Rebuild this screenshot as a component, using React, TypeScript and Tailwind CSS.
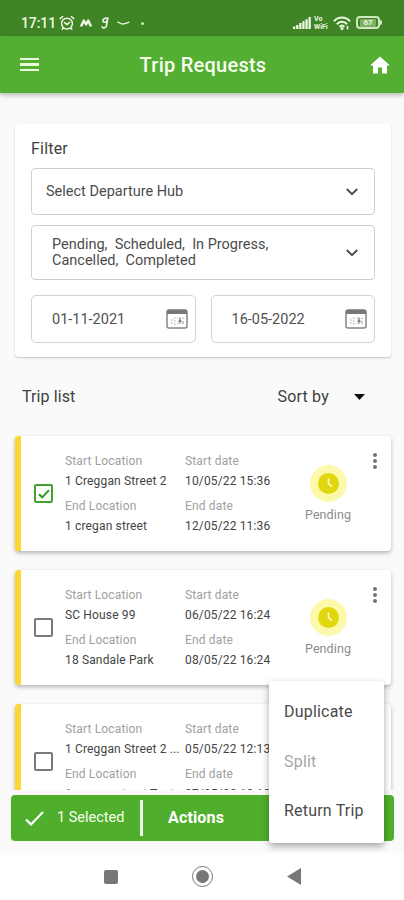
import { useState } from "react";

interface Trip {
  id: number;
  startLocation: string;
  endLocation: string;
  startDate: string;
  endDate: string;
}

const TRIPS: Trip[] = [
  {
    id: 1,
    startLocation: "1 Creggan Street 2",
    endLocation: "1 cregan street",
    startDate: "10/05/22 15:36",
    endDate: "12/05/22 11:36",
  },
  {
    id: 2,
    startLocation: "SC House 99",
    endLocation: "18 Sandale Park",
    startDate: "06/05/22 16:24",
    endDate: "08/05/22 16:24",
  },
  {
    id: 3,
    startLocation: "1 Creggan Street 2 ...",
    endLocation: "1 cregan street Test",
    startDate: "05/05/22 12:13",
    endDate: "07/05/22 12:13",
  },
];

function StatusBar() {
  return (
    <div className="flex h-9 shrink-0 items-start bg-[#3f8425] pt-[14px] pr-[22px] pl-[21px] text-[#eef8e4]">
      <span className="text-[14px] leading-[18px] font-medium tracking-[-0.1px]">
        17:11
      </span>
      <svg
        className="mt-[1px] ml-[3px] h-4 w-4"
        viewBox="0 0 16 16"
        fill="none"
        stroke="currentColor"
        strokeWidth="1.5"
        strokeLinecap="round"
        strokeLinejoin="round"
      >
        <circle cx="8" cy="8.6" r="5.4" />
        <path d="M1.2 3.6 3.7 1.5M14.8 3.6l-2.5-2.1M5.6 7.6 8 9.6l2.6-2.4M4.2 13l-1 1.2M11.8 13l1 1.2" />
      </svg>
      <svg
        className="mt-[5px] ml-[5px] h-2 w-[12px]"
        viewBox="0 0 12 8"
        fill="none"
        stroke="currentColor"
        strokeWidth="2.4"
        strokeLinejoin="round"
      >
        <path d="M1 7.5 3.8 1.6 6 5.4 8.2 1.6 11 7.5" />
      </svg>
      <svg
        className="mt-[3px] ml-[9px] h-[12px] w-[8px]"
        viewBox="0 0 8 13"
        fill="none"
        stroke="currentColor"
        strokeWidth="1.7"
        strokeLinecap="round"
      >
        <path d="M7.2 1.2C4.2.6 1.8 2 1.7 4c0 2.2 3.3 2.4 4.5-.2L7 1.4 5.6 9.2C5 12 2 12.6 1 10.6" />
      </svg>
      <svg
        className="mt-[7px] ml-[8px] h-[5px] w-[13px]"
        viewBox="0 0 13 5"
        fill="none"
        stroke="currentColor"
        strokeWidth="1.3"
        strokeLinecap="round"
      >
        <path d="M.8 1.2c2 .2 2 1.8 5 1.8s4-1 6.2-1.8" />
      </svg>
      <span className="mt-2 ml-[11px] h-[3px] w-[3px] rounded-full bg-[#c5f78f]" />

      <div className="ml-auto flex items-start">
        <svg
          className="mt-[3px] h-[12px] w-[18px]"
          viewBox="0 0 18 12"
          fill="currentColor"
        >
          <rect x="0" y="9.5" width="2.3" height="2.5" />
          <rect x="3.1" y="8" width="2.3" height="4" />
          <rect x="6.2" y="6" width="2.3" height="6" />
          <rect x="9.3" y="4.2" width="2.3" height="7.8" />
          <rect x="12.4" y="2.2" width="2.3" height="9.8" />
          <rect x="15.5" y="0" width="2.3" height="12" />
        </svg>
        <div className="mt-px ml-[3px] flex w-4 flex-col gap-px text-[7px] leading-[8px] font-bold">
          <span className="-mb-px h-2">Vo</span>
          <span className="h-2">WiFi</span>
        </div>
        <svg
          className="mt-[2px] ml-[3px] h-[14px] w-[18px]"
          viewBox="0 0 18 14"
          fill="none"
          stroke="currentColor"
          strokeWidth="2"
        >
          <path d="M1 5.2c4.600-4.800 11.400-4.800 16 0" />
          <path d="M3.800 8.200c3-3.200 7.400-3.200 10.400 0" />
          <path d="M6.500 10.800c1.500-1.500 3.500-1.500 5 0" />
          <circle cx="9" cy="12.4" r=".6" />
          <path d="M14.5 10v3.5" strokeWidth="1.6" />
        </svg>
        <div className="mt-[2px] ml-[5px] flex items-center">
          <div className="flex h-[13px] w-6 items-center justify-center rounded-[4px] border-2 border-[#d0e8bf]">
            <span className="rounded-[1px] bg-[#bfe0a8]/50 px-[3px] text-[8px] leading-[8px] font-bold">
              67
            </span>
          </div>
          <span className="h-[5px] w-[2px] rounded-r-full bg-[#d9efc9]" />
        </div>
      </div>
    </div>
  );
}

function Header() {
  return (
    <header className="relative z-10 flex h-[57px] shrink-0 items-center justify-between bg-[#53ae31] pr-[14px] pl-5 text-[#f6ffef] shadow-[0_2px_5px_rgba(0,0,0,0.28)]">
      <button className="flex w-[19px] flex-col gap-[3px]">
        <span className="h-[2.5px] w-full bg-[#eafbdc]" />
        <span className="h-[2.5px] w-full bg-[#eafbdc]" />
        <span className="h-[2.5px] w-full bg-[#eafbdc]" />
      </button>
      <h1 className="mr-[3px] text-[20px] leading-6 font-medium tracking-[0.25px]">
        Trip Requests
      </h1>
      <svg className="h-[18px] w-5" viewBox="2 3 20 17" fill="#fff">
        <path d="M10 20v-6h4v6h5v-8h3L12 3 2 12h3v8z" />
      </svg>
    </header>
  );
}

function Chevron() {
  return (
    <svg
      className="h-2 w-3"
      viewBox="0 0 12 8"
      fill="none"
      stroke="#4a4a4a"
      strokeWidth="1.8"
    >
      <path d="M.8 1 6 6.2 11.2 1" />
    </svg>
  );
}

function CalendarIcon() {
  return (
    <svg className="h-5 w-[22px]" viewBox="0 0 22 20" fill="none">
      <rect
        x="1"
        y="1"
        width="20"
        height="18"
        rx="2"
        stroke="#858585"
        strokeWidth="1.5"
      />
      <path d="M1 5V2.5Q1 .8 2.8.8h16.4Q21 .8 21 2.5V5z" fill="#777" />
      <path
        d="M5 11h1.5M5 14h1.5M8 9h1.5M8 12h1.500M8 15h1.500M11.500 9h1M11.500 14.500h1M17 8.500v1.500M17 12v3"
        stroke="#a3a3a3"
        strokeWidth="1.2"
      />
      <path d="M14 8.5v6M12.5 12h3" stroke="#777" strokeWidth="1.3" />
    </svg>
  );
}

function DateField({ value }: { value: string }) {
  return (
    <div className="flex h-12 flex-1 items-center justify-between rounded-[5px] border border-[#d2d2d2] pr-[7px] pl-5">
      <span className="mt-px text-[14.5px] text-[#505050]">{value}</span>
      <CalendarIcon />
    </div>
  );
}

function FilterCard() {
  return (
    <section className="mt-[31px] mr-[13px] ml-[15px] h-[233px] shrink-0 rounded-[4px] bg-white px-4 pt-[15px] shadow-[0_1px_2px_rgba(0,0,0,0.22)]">
      <h2 className="text-[16px] leading-5 tracking-[0.2px] text-[#3f3f3f]">
        Filter
      </h2>
      <div className="mt-[9px] flex h-[47px] items-center justify-between rounded-[4px] border border-[#cfcfcf] pr-4 pl-[14px]">
        <span className="mt-px text-[14.5px] text-[#4c4c4c]">
          Select Departure Hub
        </span>
        <Chevron />
      </div>
      <div className="mt-[10px] flex h-[55px] items-center justify-between rounded-[4px] border border-[#cfcfcf] pr-4 pl-5">
        <p className="mt-px text-[14.5px] leading-4 whitespace-pre text-[#4c4c4c]">
          {"Pending,  Scheduled,  In Progress,\nCancelled,  Completed"}
        </p>
        <Chevron />
      </div>
      <div className="mt-[15px] flex gap-[15px]">
        <DateField value="01-11-2021" />
        <DateField value="16-05-2022" />
      </div>
    </section>
  );
}

interface CheckboxProps {
  checked: boolean;
  onToggle: () => void;
}

function Checkbox({ checked, onToggle }: CheckboxProps) {
  return (
    <button
      role="checkbox"
      aria-checked={checked}
      onClick={onToggle}
      className={
        checked
          ? "flex h-[19px] w-[19px] items-center justify-center rounded-[2px] border-2 border-[#41a32e]"
          : "flex h-[19px] w-[19px] items-center justify-center rounded-[2px] border-2 border-[#7a7a7a]"
      }
    >
      {checked && (
        <svg
          className="h-[10px] w-[12px]"
          viewBox="0 0 12 10"
          fill="none"
          stroke="#249a1c"
          strokeWidth="1.9"
        >
          <path d="M1 5.2 4.2 8.3 11 1.2" />
        </svg>
      )}
    </button>
  );
}

function Field({ label, value }: { label: string; value: string }) {
  return (
    <div className="whitespace-nowrap">
      <p className="text-[12px] leading-5 tracking-[0.15px] text-[#a0a0a0]">
        {label}
      </p>
      <p className="text-[12px] leading-5 tracking-[0.15px] text-[#444]">
        {value}
      </p>
    </div>
  );
}

interface TripCardProps {
  trip: Trip;
  checked: boolean;
  onToggle: () => void;
}

function TripCard({ trip, checked, onToggle }: TripCardProps) {
  return (
    <article className="flex h-[115px] shrink-0 rounded-[4px] border-l-[6px] border-[#fdd631] bg-white shadow-[0_2px_4px_rgba(0,0,0,0.28)]">
      <div className="flex w-11 items-center pl-[13px]">
        <Checkbox checked={checked} onToggle={onToggle} />
      </div>
      <div className="flex w-[120px] flex-col gap-[4.5px] pt-[15px]">
        <Field label="Start Location" value={trip.startLocation} />
        <Field label="End Location" value={trip.endLocation} />
      </div>
      <div className="flex w-[115px] flex-col gap-[4.5px] pt-[15px]">
        <Field label="Start date" value={trip.startDate} />
        <Field label="End date" value={trip.endDate} />
      </div>
      <div className="flex w-14 flex-col items-center pt-[29px]">
        <div className="flex h-[37px] w-[37px] items-center justify-center rounded-full bg-[#fdf9ab]">
          <svg className="h-[21px] w-[21px]" viewBox="0 0 21 21" fill="none">
            <circle cx="10.5" cy="10.5" r="10.5" fill="#e0d80d" />
            <path
              d="M10.5 5.5v5.2l3.5 3"
              stroke="#fffbd0"
              strokeWidth="1.6"
            />
          </svg>
        </div>
        <span className="mt-[5px] text-[12.5px] leading-4 tracking-[0.1px] text-[#8b8b8b]">
          Pending
        </span>
      </div>
      <button className="ml-auto flex h-9 flex-col justify-end gap-[2px] pr-[14px] pb-[3px]">
        <span className="h-1 w-1 rounded-full bg-[#727272]" />
        <span className="h-1 w-1 rounded-full bg-[#727272]" />
        <span className="h-1 w-1 rounded-full bg-[#727272]" />
      </button>
    </article>
  );
}

function ActionsMenu() {
  return (
    <div className="absolute right-[10px] bottom-[-2px] flex h-[162px] w-[115px] flex-col rounded-[3px] bg-white px-[15px] pt-[6px] text-[16px] leading-[49.5px] tracking-[0.2px] whitespace-nowrap text-[#4a4a4a] shadow-[0_3px_7px_rgba(0,0,0,0.35)]">
      <button className="text-left">Duplicate</button>
      <button className="text-left text-[#a6a6a6]" disabled>
        Split
      </button>
      <button className="text-left">Return Trip</button>
    </div>
  );
}

function SelectionBar({ count }: { count: number }) {
  return (
    <div className="relative mr-[10px] ml-[11px] flex h-[46px] shrink-0 items-center rounded-[4px] bg-[#4faf2c] pl-[14px] text-[#f6ffef]">
      <svg
        className="h-[15px] w-[19px]"
        viewBox="0 0 19 15"
        fill="none"
        stroke="#fff"
        strokeWidth="2.2"
      >
        <path d="M1 8.5 6 13.4 18 1" />
      </svg>
      <span className="ml-[13px] w-[72px] text-[14.5px] whitespace-nowrap">
        {count} Selected
      </span>
      <span className="ml-[11px] h-9 w-[3px] bg-[#effbe8]" />
      <span className="ml-[25px] text-[16px] font-bold tracking-[0.15px] text-white">
        Actions
      </span>
      <ActionsMenu />
    </div>
  );
}

function NavBar() {
  return (
    <nav className="flex h-[47px] shrink-0 items-center bg-white pl-[104px]">
      <span className="h-[14px] w-[14px] rounded-[2px] bg-[#777]" />
      <span className="ml-[74px] flex h-[21px] w-[21px] items-center justify-center rounded-full border-[1.5px] border-[#777]">
        <span className="h-[13px] w-[13px] rounded-full bg-[#777]" />
      </span>
      <svg className="ml-[74px] h-[17px] w-[14px]" viewBox="0 0 14 17">
        <path d="M14 0v17L0 8.5z" fill="#777" />
      </svg>
    </nav>
  );
}

export default function App() {
  const [selected, setSelected] = useState<number[]>([1]);

  const toggle = (id: number) => {
    setSelected((prev) =>
      prev.includes(id) ? prev.filter((x) => x !== id) : [...prev, id],
    );
  };

  return (
    <div className="flex h-[900px] w-[404px] flex-col overflow-hidden bg-[#fafafa] font-['Roboto',sans-serif]">
      <StatusBar />
      <Header />
      <FilterCard />

      <div className="flex h-[69px] shrink-0 items-center pt-[10px] pr-[39px] pl-[22px] text-[16px] text-[#3f3f3f]">
        <span className="tracking-[0.1px]">Trip list</span>
        <span className="ml-auto tracking-[0.2px]">Sort by</span>
        <svg className="ml-[25px] h-[6px] w-[11px]" viewBox="0 0 11 6">
          <path d="M0 0h11L5.5 6z" fill="#111" />
        </svg>
      </div>

      <main className="flex h-[364px] shrink-0 flex-col gap-[19px] overflow-hidden pt-[10px] pr-[13px] pl-[15px]">
        {TRIPS.map((trip) => (
          <TripCard
            key={trip.id}
            trip={trip}
            checked={selected.includes(trip.id)}
            onToggle={() => toggle(trip.id)}
          />
        ))}
      </main>

      <div className="h-[63px] shrink-0 pt-[5px]">
        <SelectionBar count={selected.length} />
      </div>
      <NavBar />
    </div>
  );
}
